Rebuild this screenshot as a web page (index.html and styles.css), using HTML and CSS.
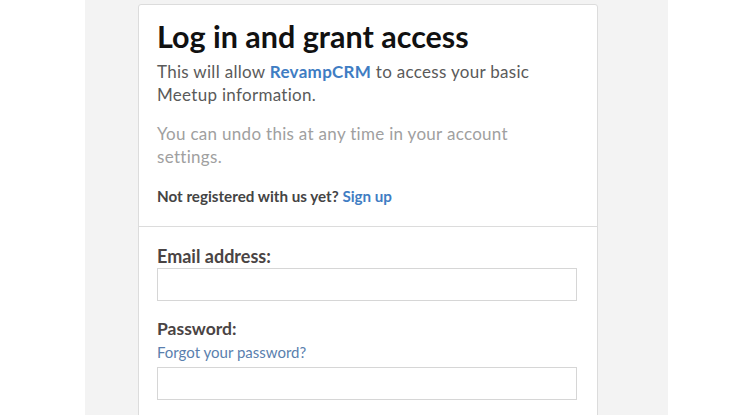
FILE: index.html
```html
<!DOCTYPE html>
<html>
<head>
<meta charset="utf-8">
<link rel="stylesheet" href="styles.css">
</head>
<body>
<div class="band">
  <div class="card">
    <div class="intro">
      <h1 class="title">Log in and grant access</h1>
      <p class="lead">This will allow <a class="app">RevampCRM</a> to access your basic Meetup information.</p>
      <p class="note">You can undo this at any time in your account settings.</p>
      <p class="signup">Not registered with us yet? <a class="link">Sign up</a></p>
    </div>
    <div class="form">
      <label class="label">Email address:</label>
      <input class="field" type="text">
      <label class="label label-pw">Password:</label>
      <a class="forgot">Forgot your password?</a>
      <input class="field field-pw" type="password">
    </div>
  </div>
</div>
</body>
</html>
```

FILE: styles.css
```css
html, body {
  margin: 0;
  padding: 0;
  background: #fff;
  height: 100%;
  overflow: hidden;
}
body {
  font-family: Lato, "Open Sans", sans-serif;
}
.band {
  margin-left: 85px;
  width: 583px;
  min-height: 415px;
  background: #f3f3f3;
  padding-top: 4px;
  box-sizing: border-box;
}
.card {
  margin-left: 53px;
  width: 460px;
  min-height: 420px;
  background: #fff;
  border: 1px solid #dcdcdc;
  border-radius: 3px;
  box-sizing: border-box;
}
.intro {
  padding: 13px 20px 20px 18px;
  border-bottom: 1px solid #dcdcdc;
}
.title {
  margin: 0;
  font-size: 30.5px;
  font-weight: 700;
  line-height: 36px;
  color: #111;
}
.lead {
  margin: 6px 0 0;
  max-width: 400px;
  font-size: 17px;
  line-height: 23px;
  letter-spacing: 0.3px;
  color: #5a5a5a;
}
.app {
  color: #3f7dc3;
  font-weight: 700;
}
.note {
  margin: 16px 0 0;
  max-width: 400px;
  font-size: 17px;
  line-height: 23px;
  letter-spacing: 0.3px;
  color: #a0a0a0;
}
.signup {
  margin: 18px 0 0;
  font-size: 15.2px;
  line-height: 20px;
  font-weight: 700;
  color: #444;
}
.link {
  color: #3f7dc3;
}
.form {
  padding: 18px 20px 0 18px;
  display: flex;
  flex-direction: column;
}
.label {
  font-size: 18px;
  font-weight: 700;
  line-height: 22px;
  color: #4a4444;
}
.label-pw {
  margin-top: 17px;
  font-size: 17.5px;
}
.forgot {
  font-size: 15px;
  line-height: 20px;
  color: #5a7fae;
  margin-top: 2px;
}
.field {
  margin: 1px 0 0;
  height: 33px;
  width: 100%;
  box-sizing: border-box;
  border: 1px solid #d6d6d6;
  border-radius: 0;
  background: #fff;
  padding: 0 8px;
  font-family: inherit;
  outline: none;
}
.field-pw {
  margin-top: 5px;
}
```
